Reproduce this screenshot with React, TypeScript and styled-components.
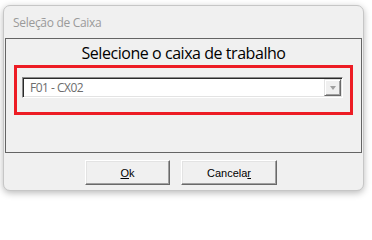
import React from "react";
import styled, { createGlobalStyle } from "styled-components";

const GlobalStyle = createGlobalStyle`
  html, body {
    margin: 0;
    padding: 0;
    background: #ffffff;
  }
  * { box-sizing: border-box; }
`;

const Screen = styled.div`
  padding: 5px 0 0 3px;
  width: 372px;
  height: 207px;
`;

const Window = styled.div`
  width: 361px;
  height: 186px;
  border: 1px solid #c6c6c6;
  border-radius: 7px;
  background: #f0f0f0;
  box-shadow: 0 2px 7px rgba(0, 0, 0, 0.28);
  display: flex;
  flex-direction: column;
  overflow: hidden;
`;

const TitleBar = styled.div`
  height: 32px;
  padding-left: 9px;
  display: flex;
  align-items: center;
  font-family: "Open Sans", sans-serif;
  font-size: 12px;
  letter-spacing: -0.3px;
  color: #9a9a9a;
`;

const Panel = styled.div`
  margin: 0 1px;
  height: 115px;
  border: 1px solid #646464;
  display: flex;
  flex-direction: column;
`;

const Heading = styled.div`
  margin-top: 4px;
  height: 20px;
  line-height: 20px;
  text-align: center;
  font-family: "Open Sans", sans-serif;
  font-size: 16px;
  letter-spacing: -0.45px;
  color: #000;
`;

const Highlight = styled.div`
  margin: 2px 0 0 8px;
  width: 339px;
  height: 50px;
  border: 3px solid #ed1c24;
  padding: 9px 0 0 5px;
`;

const Combo = styled.div`
  width: 321px;
  height: 21px;
  border: 1px solid;
  border-color: #8a8a8a #ffffff #ffffff #8a8a8a;
  box-shadow: inset 1px 1px 0 #2a2a2a, inset -1px -1px 0 #e3e3e3;
  background: #ffffff;
  display: flex;
  align-items: stretch;
  padding: 1px;
`;

const ComboText = styled.div`
  flex: 1;
  padding-left: 6px;
  display: flex;
  align-items: center;
  font-family: "Open Sans", sans-serif;
  font-size: 12px;
  letter-spacing: -0.5px;
  color: #6d6d6d;
`;

const DropButton = styled.div`
  width: 17px;
  border: 1px solid;
  border-color: #e3e3e3 #696969 #696969 #e3e3e3;
  box-shadow: inset 1px 1px 0 #ffffff, inset -1px -1px 0 #a0a0a0;
  background: #f0f0f0;
  display: flex;
  align-items: center;
  justify-content: center;
`;

const Arrow = styled.div`
  width: 0;
  height: 0;
  border-left: 3.5px solid transparent;
  border-right: 3.5px solid transparent;
  border-top: 4px solid #a0a0a0;
  margin-top: 1px;
`;

const ButtonRow = styled.div`
  display: flex;
  gap: 11px;
  padding-left: 81px;
  margin-top: 7px;
`;

const Button = styled.div<{ $w: number }>`
  width: ${(p) => p.$w}px;
  height: 25px;
  border: 1px solid;
  border-color: #ffffff #696969 #696969 #ffffff;
  box-shadow: inset -1px -1px 0 #a0a0a0, inset 1px 1px 0 #e3e3e3;
  background: #f0f0f0;
  display: flex;
  align-items: center;
  justify-content: center;
  font-family: "Liberation Sans", Arial, sans-serif;
  font-size: 11px;
  color: #000;
`;

const Key = styled.span`
  text-decoration: underline;
`;

export default function App() {
  return (
    <>
      <GlobalStyle />
      <Screen>
        <Window>
          <TitleBar>Seleção de Caixa</TitleBar>
          <Panel>
            <Heading>Selecione o caixa de trabalho</Heading>
            <Highlight>
              <Combo>
                <ComboText>F01 - CX02</ComboText>
                <DropButton>
                  <Arrow />
                </DropButton>
              </Combo>
            </Highlight>
          </Panel>
          <ButtonRow>
            <Button $w={85}>
              <Key>O</Key>k
            </Button>
            <Button $w={96}>
              Cancela<Key>r</Key>
            </Button>
          </ButtonRow>
        </Window>
      </Screen>
    </>
  );
}
